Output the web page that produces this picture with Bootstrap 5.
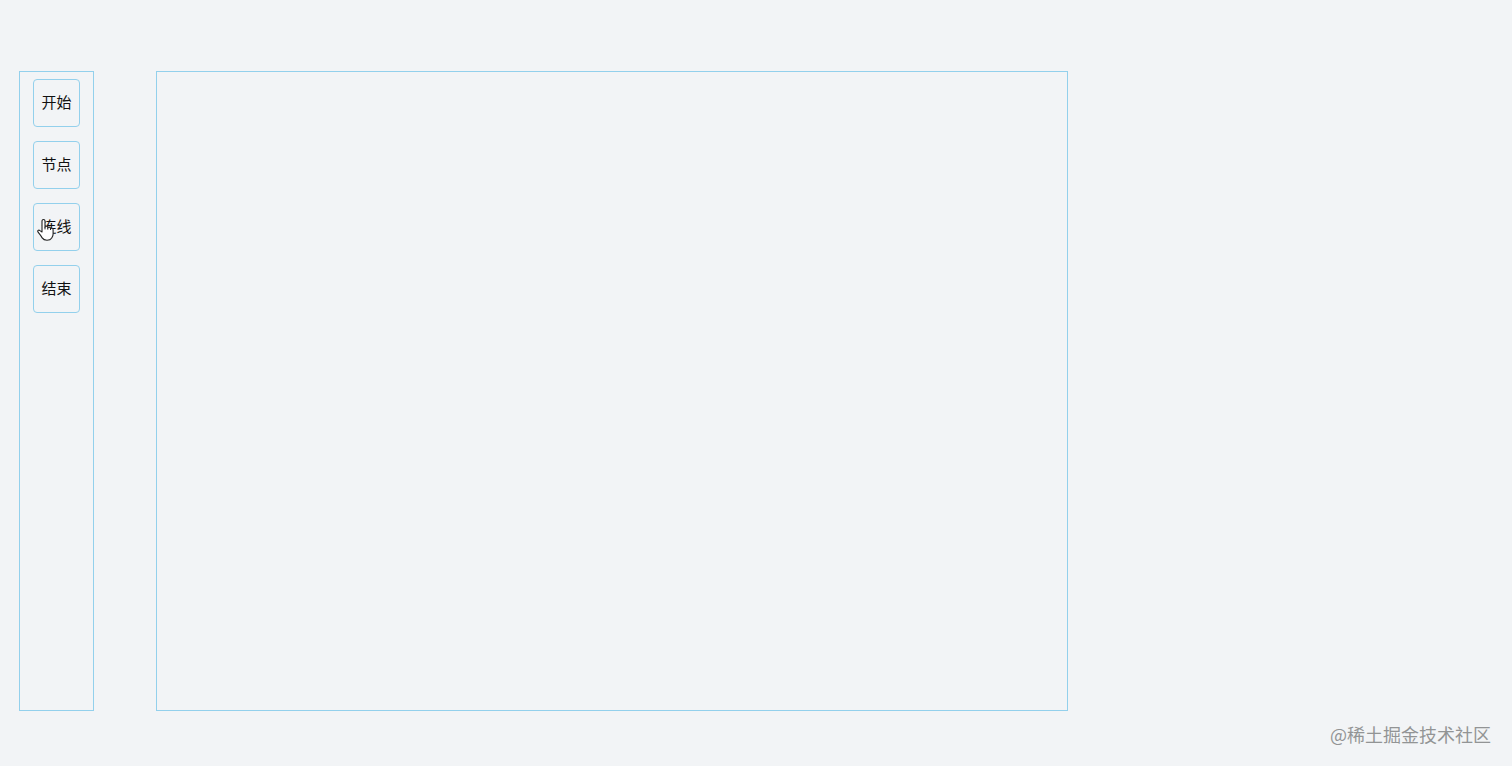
<!DOCTYPE html>
<html lang="zh-CN">
<head>
<meta charset="utf-8">
<meta name="viewport" content="width=device-width, initial-scale=1">
<title>流程图编辑器</title>
<link href="https://cdn.jsdelivr.net/npm/bootstrap@5.3.0/dist/css/bootstrap.min.css" rel="stylesheet">
<style>
  body {
    background: #f2f4f6;
    color: #111;
    font-family: "Noto Sans CJK SC", sans-serif;
  }
  .editor {
    display: grid;
    grid-template-columns: 75px 62px minmax(0, 76fr) minmax(0, 37fr);
    padding: 71px 0 0 19px;
  }
  .outlined { border: 1px solid #93d0ec; }
  .palette { padding-top: 7px; gap: 14px; }
  .drawing-area { grid-column: 3; }
  .tool {
    width: 47px;
    height: 48px;
    padding: 0 0 2px;
    border-radius: 4px;
    background: transparent;
    color: inherit;
    font-size: 15px;
    line-height: 20px;
  }
  .pointer { left: 3px; top: 14px; }
  .credit {
    height: 55px;
    padding: 10px 21px 0 0;
    color: #929495;
    font-size: 18px;
    line-height: 26px;
  }
</style>
</head>
<body>
<div class="d-flex flex-column min-vh-100">
  <main class="editor flex-grow-1">
    <nav class="palette outlined d-flex flex-column align-items-center" aria-label="工具">
      <button type="button" class="tool outlined">开始</button>
      <button type="button" class="tool outlined">节点</button>
      <button type="button" class="tool outlined position-relative">连线
        <svg class="pointer position-absolute" width="18" height="24" viewBox="0 0 18 24" aria-hidden="true">
          <path d="M5 14V3.1C5 1 8 1 8 3.1v6.1c0-1.5 2.7-1.4 2.8.1v.6c.3-1.2 2.6-1 2.7.4v.6c.4-1.1 2.6-.9 2.6.8v4.2c0 2.3-1.1 3.3-1.6 4.4-.8 1.5-2.3 2-4.5 2-2.4 0-3.8-.8-4.8-2.4-1.1-2.2-2.7-3.8-4.1-5.7-1-1.5.5-2.7 1.9-1.6z" fill="#fff" stroke="#222" stroke-width="1.1" stroke-linejoin="round"/>
          <path d="M8 9v2.4M10.8 9.8v1.8M13.5 10.8v1.2" fill="none" stroke="#222"/>
        </svg>
      </button>
      <button type="button" class="tool outlined">结束</button>
    </nav>
    <section class="drawing-area outlined" aria-label="画布"></section>
  </main>
  <footer class="credit text-end">@稀土掘金技术社区</footer>
</div>
<script src="https://cdn.jsdelivr.net/npm/bootstrap@5.3.0/dist/js/bootstrap.bundle.min.js"></script>
</body>
</html>
